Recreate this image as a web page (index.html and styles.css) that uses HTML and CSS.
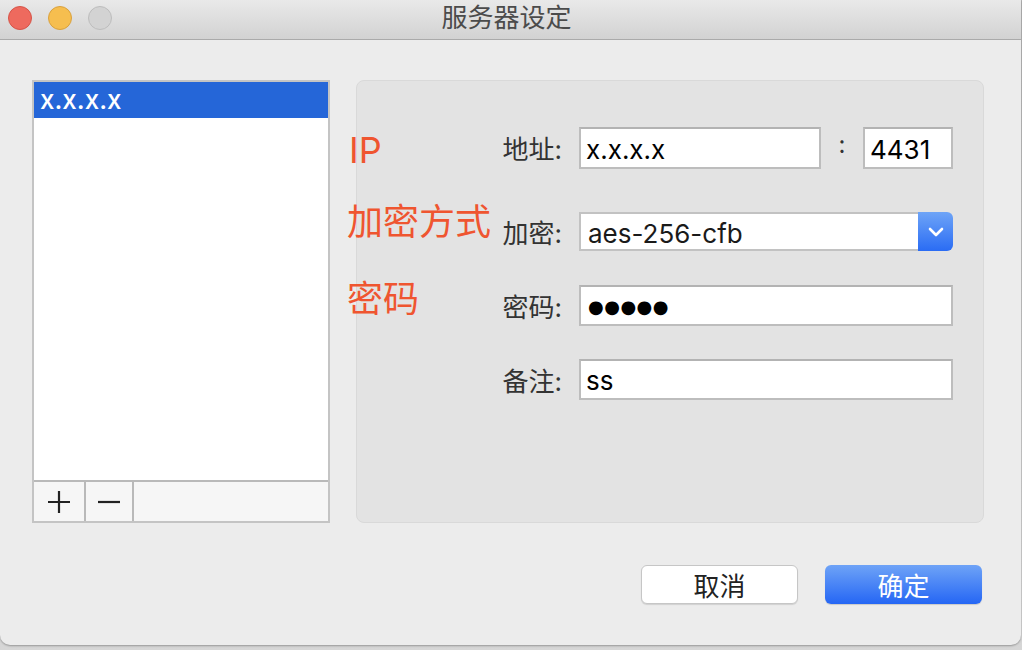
FILE: index.html
```html
<!DOCTYPE html>
<html lang="zh-CN">
<head>
    <meta charset="UTF-8">
    <title>服务器设定</title>
    <link rel="stylesheet" href="styles.css">
</head>
<body>
    <div class="window">
        <div class="titlebar">
            <div class="lights">
                <span class="light light-close"></span>
                <span class="light light-min"></span>
                <span class="light light-zoom"></span>
            </div>
            <div class="title">服务器设定</div>
            <div></div>
        </div>

        <div class="content">
            <div class="main">
                <div class="server-list">
                    <ul class="servers">
                        <li class="selected">x.x.x.x</li>
                    </ul>
                    <div class="list-tools">
                        <button class="tool-btn plus-btn">
                            <svg width="24" height="24" viewBox="0 0 24 24"><path d="M12 1v22M1 12h22" stroke="#222" stroke-width="2.2" fill="none"/></svg>
                        </button>
                        <button class="tool-btn minus-btn">
                            <svg width="24" height="24" viewBox="0 0 24 24"><path d="M1 12h22" stroke="#222" stroke-width="2.2" fill="none"/></svg>
                        </button>
                        <div class="tool-space"></div>
                    </div>
                </div>

                <div class="panel">
                    <!-- 红色标注 -->
                    <span class="note note-ip">IP</span>
                    <span class="note note-method">加密方式</span>
                    <span class="note note-pass">密码</span>

                    <div class="form-row row-addr">
                        <label class="field-label">地址:</label>
                        <input class="field addr-field" type="text" value="x.x.x.x">
                        <span class="port-sep">:</span>
                        <input class="field port-field" type="text" value="4431">
                    </div>

                    <div class="form-row row-method">
                        <label class="field-label">加密:</label>
                        <div class="select">
                            <span class="select-value">aes-256-cfb</span>
                            <span class="select-arrow">
                                <svg width="16" height="10" viewBox="0 0 16 10"><path d="M2 2l6 6 6-6" stroke="#fff" stroke-width="2.6" fill="none" stroke-linecap="round" stroke-linejoin="round"/></svg>
                            </span>
                        </div>
                    </div>

                    <div class="form-row row-pass">
                        <label class="field-label">密码:</label>
                        <div class="field field-wide dots">●●●●●</div>
                    </div>

                    <div class="form-row row-remark">
                        <label class="field-label">备注:</label>
                        <input class="field field-wide" type="text" value="ss">
                    </div>
                </div>
            </div>

            <div class="actions">
                <button class="btn btn-cancel">取消</button>
                <button class="btn btn-ok">确定</button>
            </div>
        </div>
    </div>
</body>
</html>
```

FILE: styles.css
```css
* {
    margin: 0;
    padding: 0;
    box-sizing: border-box;
}

body {
    width: 1022px;
    height: 650px;
    overflow: hidden;
    background: linear-gradient(#b4b4b4, #d6d6d6);
    font-family: Inter, "Noto Sans CJK SC", sans-serif;
}

.window {
    width: 1021px;
    height: 645px;
    background-color: #ececec;
    border-radius: 0 0 10px 10px;
    box-shadow: 0 1px 2px rgba(0, 0, 0, 0.3);
    overflow: hidden;
}

/* 标题栏 */
.titlebar {
    height: 40px;
    display: grid;
    grid-template-columns: 1fr auto 1fr;
    align-items: center;
    padding-bottom: 3px;
    background: linear-gradient(#e9e9e9, #d2d2d2);
    border-bottom: 1px solid #aaaaaa;
}

.lights {
    display: flex;
    gap: 16px;
    padding-left: 8px;
}

.light {
    width: 24px;
    height: 24px;
    border-radius: 50%;
}

.light-close {
    background-color: #ee6a5e;
    border: 1px solid #d65448;
}

.light-min {
    background-color: #f6be4f;
    border: 1px solid #d9a13e;
}

.light-zoom {
    background-color: #d3d3d3;
    border: 1px solid #bdbdbd;
}

.title {
    font-size: 26px;
    color: #4b4b4b;
    padding-right: 8px;
    line-height: 1;
}

/* 主体 */
.content {
    padding: 40px 39px 0 32px;
}

.main {
    display: flex;
    gap: 26px;
    height: 443px;
}

.server-list {
    flex-shrink: 0;
    width: 298px;
    display: flex;
    flex-direction: column;
    border: 2px solid #c4c4c4;
    background-color: #fff;
}

.servers {
    list-style: none;
    flex: 1;
}

.servers li {
    height: 36px;
    line-height: 36px;
    padding-left: 6px;
    font-size: 26px;
    font-weight: 500;
    color: #333;
}

.servers li.selected {
    background-color: #2566d8;
    color: #fff;
}

.list-tools {
    height: 41px;
    display: flex;
    border-top: 2px solid #b9b9b9;
    background-color: #f6f6f6;
}

.tool-btn {
    border: none;
    border-right: 2px solid #b9b9b9;
    background: transparent;
    display: flex;
    align-items: center;
    justify-content: center;
}

.plus-btn {
    width: 52px;
}

.minus-btn {
    width: 48px;
}

.tool-space {
    flex: 1;
}

/* 设置面板 */
.panel {
    position: relative;
    flex-shrink: 0;
    width: 628px;
    padding: 46px 30px 0 8px;
    background-color: #e3e3e3;
    border: 1px solid #d9d9d9;
    border-radius: 8px;
}

.note {
    position: absolute;
    left: -10px;
    font-size: 36px;
    line-height: 36px;
    color: #ef5530;
    white-space: nowrap;
}

.note-ip {
    left: -8px;
    top: 51px;
}

.note-method {
    top: 123px;
}

.note-pass {
    top: 200px;
}

.form-row {
    display: flex;
    align-items: center;
}

.row-method {
    margin-top: 43px;
}

.row-pass {
    margin-top: 34px;
}

.row-remark {
    margin-top: 33px;
}

.field-label {
    width: 197px;
    margin-right: 17px;
    text-align: right;
    font-size: 26px;
    color: #333;
    line-height: 1;
    padding-top: 4px;
}

.field {
    height: 41px;
    border: 2px solid #bdbdbd;
    border-top-color: #b3b3b3;
    background-color: #fff;
    padding: 2px 0 0 5px;
    font-family: Inter, "Noto Sans CJK SC", sans-serif;
    font-size: 26px;
    color: #000;
    outline: none;
}

.addr-field {
    height: 42px;
    width: 242px;
}

.port-sep {
    width: 42px;
    text-align: center;
    font-size: 24px;
    color: #333;
    padding-bottom: 8px;
}

.port-field {
    height: 42px;
    width: 90px;
}

.field-wide {
    width: 374px;
}

.dots {
    display: flex;
    align-items: center;
    padding-left: 7px;
    font-family: "DejaVu Sans", sans-serif;
    font-size: 18px;
    letter-spacing: 0.5px;
}

.select {
    width: 374px;
    height: 39px;
    display: flex;
}

.select-value {
    flex: 1;
    display: flex;
    align-items: center;
    padding: 4px 0 0 7px;
    font-size: 26px;
    color: #1a1a1a;
    background-color: #fff;
    border: 2px solid #c2c2c2;
    border-right: none;
}

.select-arrow {
    width: 35px;
    display: flex;
    align-items: center;
    justify-content: center;
    background: linear-gradient(#6ea4f7, #2a6cf4);
    border-radius: 0 6px 6px 0;
}

/* 底部按钮 */
.actions {
    display: flex;
    justify-content: flex-end;
    gap: 27px;
    margin-top: 42px;
}

.btn {
    width: 157px;
    height: 39px;
    border-radius: 6px;
    font-family: Inter, "Noto Sans CJK SC", sans-serif;
    font-size: 26px;
    cursor: pointer;
}

.btn-cancel {
    background-color: #fff;
    color: #222;
    border: 1px solid #c6c6c6;
    box-shadow: 0 1px 1px rgba(0, 0, 0, 0.12);
}

.btn-ok {
    background: linear-gradient(#6ea3f7, #2566f4);
    color: #fff;
    border: none;
    box-shadow: 0 1px 1px rgba(0, 0, 0, 0.15);
}
```
